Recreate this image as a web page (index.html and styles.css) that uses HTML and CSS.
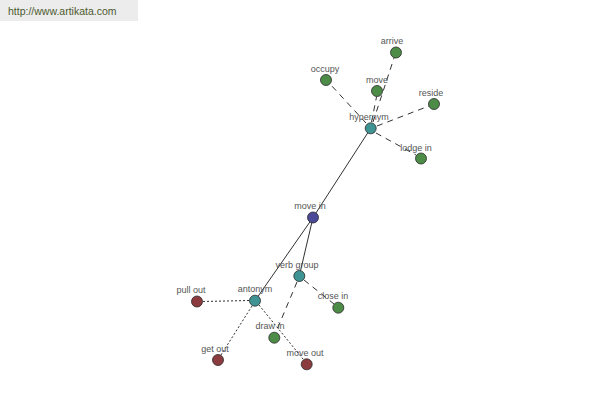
FILE: index.html
```html
<!DOCTYPE html>
<html>
<head>
<meta charset="utf-8">
<link rel="stylesheet" href="styles.css">
</head>
<body>
<div class="page">
  <div class="site">http://www.artikata.com</div>
  <svg class="graph" width="600" height="400" viewBox="0 0 600 400" xmlns="http://www.w3.org/2000/svg">
    <g class="edges">
      <line class="solid" x1="370.7" y1="128.3" x2="313" y2="217.5"/>
      <line class="solid" x1="313" y1="217.5" x2="299.3" y2="276"/>
      <line class="solid" x1="313" y1="217.5" x2="255" y2="300.7"/>
      <line class="dash" x1="366" y1="123" x2="330" y2="84"/>
      <line class="dash" x1="371.5" y1="122" x2="376.5" y2="97"/>
      <line class="dash" x1="373" y1="122" x2="394" y2="58"/>
      <line class="dash" x1="377" y1="126" x2="429" y2="106"/>
      <line class="dash" x1="376" y1="133" x2="416" y2="155"/>
      <line class="dash" x1="304" y1="280" x2="334" y2="304"/>
      <line class="dash" x1="297" y1="282" x2="276" y2="332"/>
      <line class="dot" x1="249" y1="300.5" x2="203" y2="301.5"/>
      <line class="dot" x1="252" y1="306" x2="221" y2="355"/>
      <line class="dot" x1="259" y1="305" x2="303" y2="359"/>
    </g>
    <g class="nodes">
      <circle class="green" cx="396" cy="52.5" r="5.5"/>
      <circle class="green" cx="326" cy="80" r="5.5"/>
      <circle class="green" cx="377" cy="91" r="5.5"/>
      <circle class="green" cx="434" cy="104" r="5.5"/>
      <circle class="teal" cx="370.7" cy="128.3" r="5.5"/>
      <circle class="green" cx="421" cy="158.5" r="5.5"/>
      <circle class="blue" cx="313" cy="217.5" r="5.5"/>
      <circle class="teal" cx="299.3" cy="276" r="5.5"/>
      <circle class="green" cx="338.3" cy="307.7" r="5.5"/>
      <circle class="red" cx="197" cy="301.5" r="5.5"/>
      <circle class="teal" cx="255" cy="300.7" r="5.5"/>
      <circle class="green" cx="274.3" cy="337.7" r="5.5"/>
      <circle class="red" cx="218" cy="360" r="5.5"/>
      <circle class="red" cx="306.7" cy="364.3" r="5.5"/>
    </g>
    <g class="labels">
      <text x="392" y="44">arrive</text>
      <text x="325" y="72">occupy</text>
      <text x="377" y="83">move</text>
      <text x="431" y="96">reside</text>
      <text x="369" y="120">hypernym</text>
      <text x="416" y="151">lodge in</text>
      <text x="310" y="209">move in</text>
      <text x="297" y="268">verb group</text>
      <text x="333" y="299">close in</text>
      <text x="191" y="293">pull out</text>
      <text x="255" y="292">antonym</text>
      <text x="270" y="329">draw in</text>
      <text x="215" y="352">get out</text>
      <text x="305" y="356">move out</text>
    </g>
  </svg>
</div>
</body>
</html>
```

FILE: styles.css
```css
html, body {
  margin: 0;
  padding: 0;
  background: #ffffff;
}
.page {
  position: relative;
  width: 600px;
  height: 400px;
  overflow: hidden;
  font-family: "Liberation Sans", Arial, sans-serif;
}
.site {
  width: 130px;
  height: 21px;
  padding-left: 8px;
  background: #ececec;
  color: #4d5a2e;
  font-size: 10.5px;
  line-height: 22px;
}
.graph {
  position: absolute;
  left: 0;
  top: 0;
}
.edges line {
  stroke: #1a1a1a;
  stroke-width: 0.9;
  fill: none;
}
.edges .dash {
  stroke-dasharray: 6 5;
}
.edges .dot {
  stroke-dasharray: 2 2;
}
.nodes circle {
  stroke: #2a2a2a;
  stroke-width: 0.8;
}
.nodes .green { fill: #4d8c47; }
.nodes .teal { fill: #3f9393; }
.nodes .blue { fill: #4a4a99; }
.nodes .red { fill: #8c3b3e; }
.labels text {
  font-family: "Liberation Sans", Arial, sans-serif;
  font-size: 9px;
  fill: #555555;
  text-anchor: middle;
}
```
